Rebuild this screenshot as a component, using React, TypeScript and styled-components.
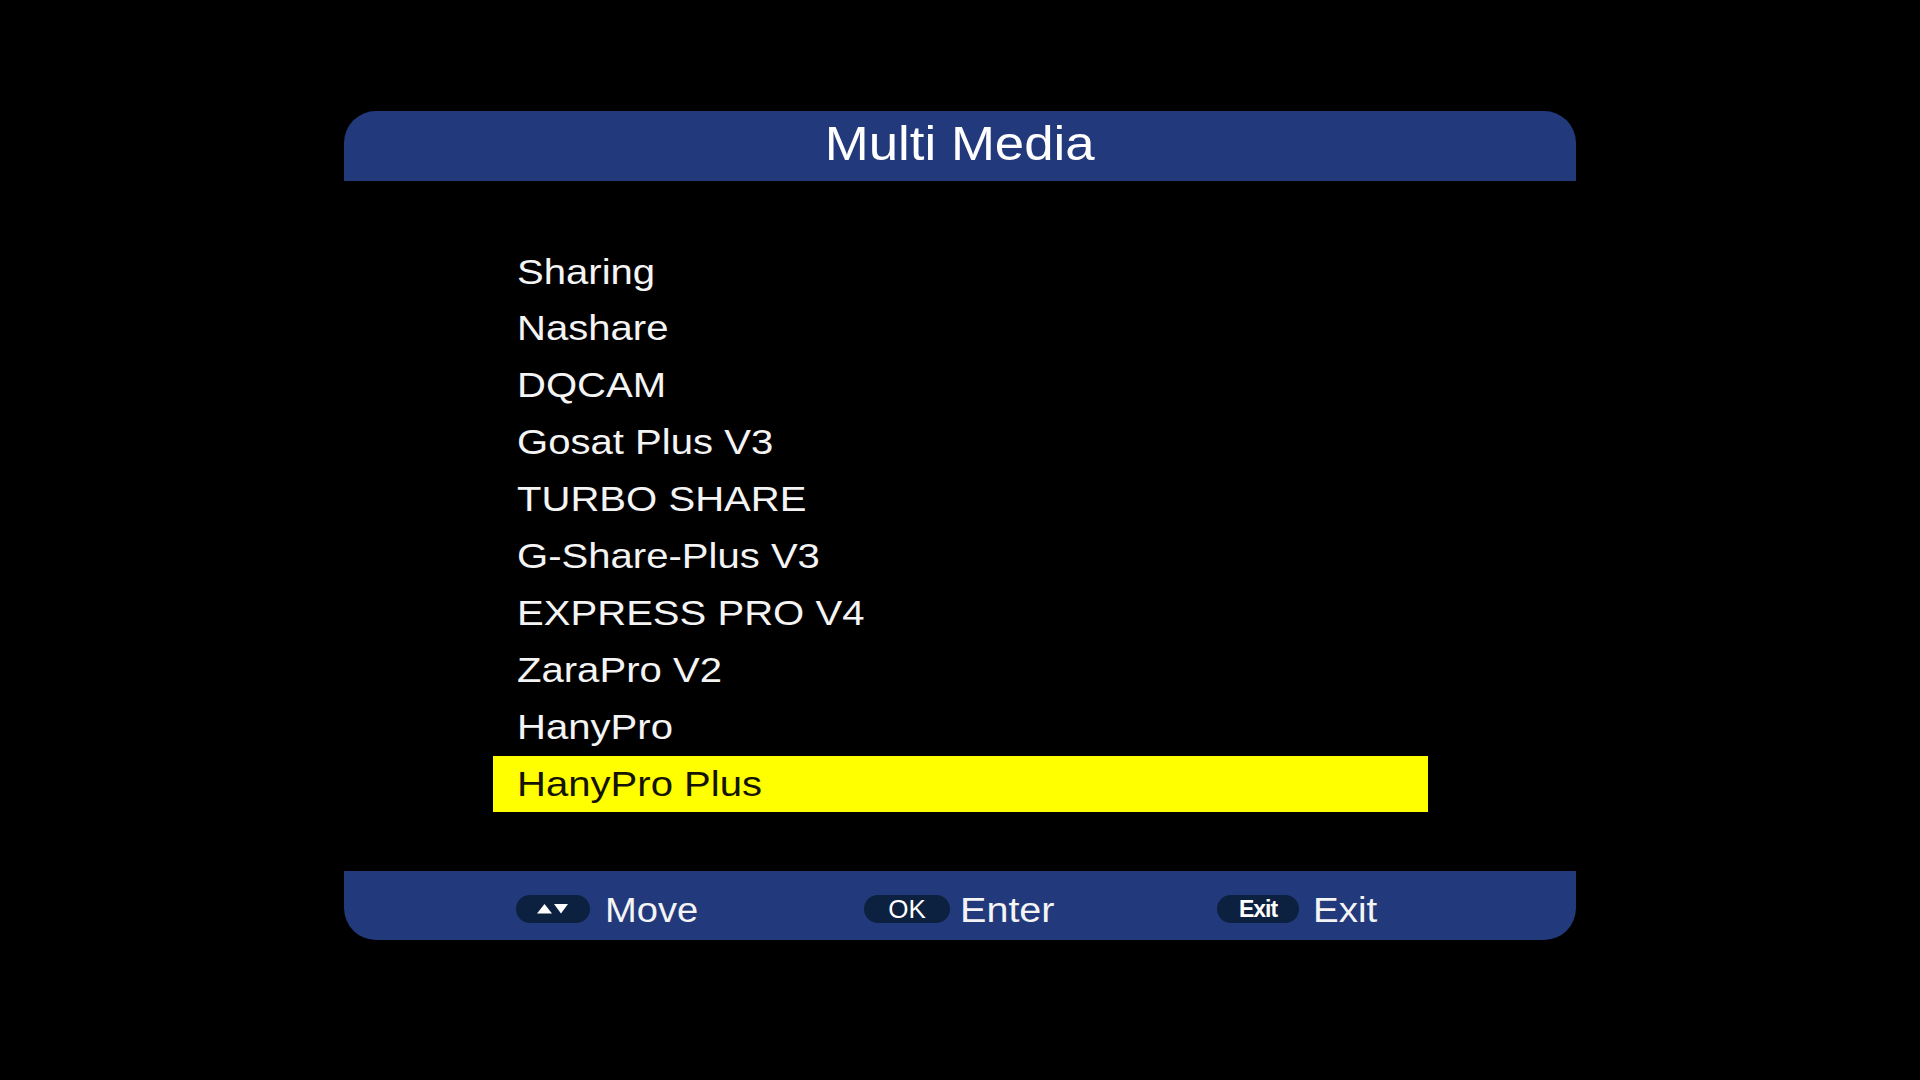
import React from "react";
import styled, { createGlobalStyle } from "styled-components";

const GlobalStyle = createGlobalStyle`
  html, body {
    margin: 0;
    padding: 0;
    background: #000000;
  }
  body {
    font-family: "Liberation Sans", Arial, sans-serif;
    color: #f4f4f4;
  }
`;

const items = [
  "Sharing",
  "Nashare",
  "DQCAM",
  "Gosat Plus V3",
  "TURBO SHARE",
  "G-Share-Plus V3",
  "EXPRESS PRO V4",
  "ZaraPro V2",
  "HanyPro",
  "HanyPro Plus",
];

const selectedIndex = 9;

const App = () => {
  return (
    <>
      <GlobalStyle />
      <Screen>
        <Panel>
          <Header>
            <Wide $scale={1.1} $origin="center">
              Multi Media
            </Wide>
          </Header>
          <Body>
            <List>
              {items.map((item, i) => (
                <Row key={item} $selected={i === selectedIndex}>
                  <Wide $scale={1.145}>{item}</Wide>
                </Row>
              ))}
            </List>
          </Body>
          <Footer>
            <Hint>
              <Key $width={74}>
                <svg width="32" height="10" viewBox="0 0 32 10">
                  <polygon points="0,9.5 7.5,0 15,9.5" fill="#ffffff" />
                  <polygon points="17,0 31,0 24,9.5" fill="#ffffff" />
                </svg>
              </Key>
              <HintLabel $gap={15}>
                <Wide $scale={1.09}>Move</Wide>
              </HintLabel>
            </Hint>
            <Hint>
              <Key $width={86}>
                <KeyText $size={26}>OK</KeyText>
              </Key>
              <HintLabel $gap={10}>
                <Wide $scale={1.13}>Enter</Wide>
              </HintLabel>
            </Hint>
            <Hint>
              <Key $width={82}>
                <KeyText $size={23} $bold>
                  Exit
                </KeyText>
              </Key>
              <HintLabel $gap={14}>
                <Wide $scale={1.1}>Exit</Wide>
              </HintLabel>
            </Hint>
          </Footer>
        </Panel>
      </Screen>
    </>
  );
};

export default App;

const Screen = styled.div`
  width: 1920px;
  height: 1080px;
  background: #000000;
  overflow: hidden;
`;

const Panel = styled.div`
  width: 1232px;
  margin: 111px auto 0;
  display: flex;
  flex-direction: column;
`;

const Header = styled.div`
  height: 70px;
  line-height: 66px;
  background: #22397b;
  border-radius: 32px 32px 0 0;
  text-align: center;
  font-size: 48px;
  color: #ffffff;
`;

const Body = styled.div`
  height: 690px;
  padding-top: 62.5px;
  box-sizing: border-box;
  display: flex;
  justify-content: center;
`;

const List = styled.ul`
  list-style: none;
  margin: 0;
  padding: 0;
  width: 935px;
`;

const Row = styled.li<{ $selected?: boolean }>`
  height: 56.9px;
  line-height: 56.9px;
  padding-left: 24px;
  font-size: 35px;
  white-space: nowrap;
  background: ${(p) => (p.$selected ? "#ffff00" : "transparent")};
  color: ${(p) => (p.$selected ? "#141400" : "#f4f4f4")};
`;

// the TV picture is horizontally stretched, so text is widened a little
const Wide = styled.span<{ $scale: number; $origin?: string }>`
  display: inline-block;
  transform: scaleX(${(p) => p.$scale});
  transform-origin: ${(p) => p.$origin || "left"} center;
`;

const Footer = styled.div`
  height: 69px;
  padding: 6px 0 0 172px;
  box-sizing: border-box;
  background: #22397b;
  border-radius: 0 0 32px 32px;
  display: grid;
  grid-template-columns: 348px 353px 1fr;
  align-items: center;
`;

const Hint = styled.div`
  display: flex;
  align-items: center;
`;

const Key = styled.div<{ $width: number }>`
  width: ${(p) => p.$width}px;
  height: 28px;
  border-radius: 14px;
  background: #0c2040;
  display: flex;
  align-items: center;
  justify-content: center;
  color: #ffffff;
`;

const KeyText = styled.span<{ $size: number; $bold?: boolean }>`
  font-size: ${(p) => p.$size}px;
  font-weight: ${(p) => (p.$bold ? 700 : 400)};
  letter-spacing: ${(p) => (p.$bold ? "-1px" : "0")};
  line-height: 28px;
`;

const HintLabel = styled.div<{ $gap: number }>`
  margin-left: ${(p) => p.$gap}px;
  font-size: 35px;
  line-height: 40px;
  padding-top: 2px;
  color: #f4f4f4;
`;
